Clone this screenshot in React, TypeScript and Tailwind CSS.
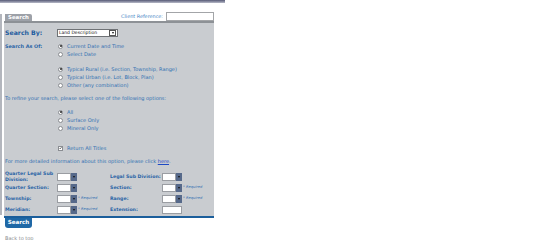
import React from 'react';

const font = { fontFamily: '"DejaVu Sans", Verdana, sans-serif' };

const Radio = ({ checked = false }: { checked?: boolean }) => (
  <span className="w-[5px] h-[5px] rounded-full bg-white border-[0.5px] border-[#8a8d92] flex items-center justify-center shrink-0">
    {checked && <span className="w-[2px] h-[2px] rounded-full bg-[#222]" />}
  </span>
);

const Option = ({ label, checked, className = '' }: { label: string; checked?: boolean; className?: string }) => (
  <div className={`flex items-center h-[8px] pl-[53px] ${className}`}>
    <Radio checked={checked} />
    <span className="ml-[4px] text-[5px] text-[#2f6fb0] leading-none">{label}</span>
  </div>
);

const Dropdown = ({ required = false }: { required?: boolean }) => (
  <div className="flex items-center">
    <span className="w-[14px] h-[8px] bg-white border-[0.5px] border-[#9a9da2]" />
    <span className="w-[6px] h-[8px] bg-[#56698a] flex items-center justify-center">
      <span className="w-0 h-0 border-l-[1.5px] border-r-[1.5px] border-t-[2px] border-l-transparent border-r-transparent border-t-[#111]" />
    </span>
    {required && <span className="ml-[1px] text-[3.6px] italic text-[#2f6fb0] leading-none">* Required</span>}
  </div>
);

const Label = ({ children, nowrap = false }: { children: React.ReactNode; nowrap?: boolean }) => (
  <span
    className={`w-[52px] shrink-0 text-[4.7px] font-bold text-[#2a64a6] leading-[6px] ${nowrap ? 'whitespace-nowrap' : ''}`}
  >
    {children}
  </span>
);

export default function App() {
  return (
    <div className="w-[541px] h-[240px] bg-white overflow-hidden" style={font}>
      <div className="h-[3px] w-[225px] bg-gradient-to-b from-[#575a76] to-[#b9bbc9]" />
      <div className="flex mt-[8px]">
        <div className="w-[2px] mt-[3px] h-[201px] bg-[#b3b6bd]" />
        <div className="ml-[2px] w-[210px]">
          {/* header */}
          <div className="flex items-end h-[10px]">
            <div className="ml-[1px] w-[27px] h-[7px] bg-[#9da1a8] rounded-tr-[2px] flex items-center justify-center">
              <span className="text-[5.4px] font-bold text-white leading-none">Search</span>
            </div>
            <div className="ml-auto flex items-center h-[9px]">
              <span className="text-[4.9px] text-[#4a88c6] leading-none mr-[3px]">Client Reference:</span>
              <span className="w-[48px] h-[9px] bg-white border-[0.5px] border-[#a3a5a8]" />
            </div>
          </div>
          <div className="h-[2px] bg-[#8d9196]" />

          {/* body */}
          <div className="bg-[#c9ccd0] pt-[6px] pl-[1px] h-[193px]">
            <div className="flex items-center h-[8px]">
              <span className="w-[52px] text-[6.2px] font-bold text-[#1f5c9f] leading-none">Search By:</span>
              <div className="w-[61px] h-[8px] bg-white border-[0.5px] border-[#6f7276] flex items-center">
                <span className="flex-1 pl-[1px] text-[4.5px] text-[#111] leading-none">Land Description</span>
                <span className="w-[7px] h-[6px] mr-[1px] border-[0.5px] border-[#555] flex items-center justify-center">
                  <span className="w-0 h-0 border-l-[1.5px] border-r-[1.5px] border-t-[2px] border-l-transparent border-r-transparent border-t-[#111]" />
                </span>
              </div>
            </div>

            <div className="relative mt-[5px]">
              <span className="absolute left-0 top-[1.5px] text-[4.9px] font-bold text-[#2a64a6] leading-none">Search As Of:</span>
              <Option label="Current Date and Time" checked />
              <Option label="Select Date" />
            </div>

            <Option className="mt-[7px]" label="Typical Rural (i.e. Section, Township, Range)" checked />
            <Option label="Typical Urban (i.e. Lot, Block, Plan)" />
            <Option label="Other (any combination)" />

            <div className="mt-[5px] h-[8px] flex items-center text-[5px] text-[#2f6fb0] leading-none">
              To refine your search, please select one of the following options:
            </div>

            <Option className="mt-[6px]" label="All" checked />
            <Option label="Surface Only" />
            <Option label="Mineral Only" />

            <div className="mt-[12px] flex items-center h-[8px] pl-[53px]">
              <span className="w-[5px] h-[5px] bg-white border-[0.5px] border-[#8a8d92] flex items-center justify-center">
                <svg viewBox="0 0 10 10" className="w-[4px] h-[4px]">
                  <path d="M1.5 5.5 L4 8 L8.5 2" fill="none" stroke="#222" strokeWidth="2" />
                </svg>
              </span>
              <span className="ml-[4px] text-[5px] text-[#2f6fb0] leading-none">Return All Titles</span>
            </div>

            <div className="mt-[5px] h-[8px] flex items-center text-[5px] text-[#2f6fb0] leading-none">
              <span>
                For more detailed information about this option, please click{' '}
                <span className="underline decoration-[0.5px] text-[#1d49c4]">here</span>.
              </span>
            </div>

            <div className="mt-[6px] grid grid-cols-[105px_1fr]">
              <div className="flex items-center h-[11px]">
                <Label>Quarter Legal Sub Division:</Label>
                <Dropdown />
              </div>
              <div className="flex items-center h-[11px]">
                <Label nowrap>Legal Sub Division:</Label>
                <Dropdown />
              </div>
              <div className="flex items-center h-[11px]">
                <Label nowrap>Quarter Section:</Label>
                <Dropdown />
              </div>
              <div className="flex items-center h-[11px]">
                <Label nowrap>Section:</Label>
                <Dropdown required />
              </div>
              <div className="flex items-center h-[11px]">
                <Label nowrap>Township:</Label>
                <Dropdown required />
              </div>
              <div className="flex items-center h-[11px]">
                <Label nowrap>Range:</Label>
                <Dropdown required />
              </div>
              <div className="flex items-center h-[11px]">
                <Label nowrap>Meridian:</Label>
                <Dropdown required />
              </div>
              <div className="flex items-center h-[11px]">
                <Label nowrap>Extension:</Label>
                <span className="w-[20px] h-[8px] bg-white border-[0.5px] border-[#9a9da2]" />
              </div>
            </div>
          </div>

          {/* footer tab */}
          <div className="h-[2px] bg-[#1b5e9b]" />
          <div className="ml-[1px] w-[27px] h-[10px] bg-[#1f68a6] rounded-b-[3px] flex items-center justify-center">
            <span className="text-[5.6px] font-bold text-white leading-none">Search</span>
          </div>
          <div className="mt-[8px] ml-[1px] text-[5px] text-[#8a8c90] leading-none">Back to top</div>
        </div>
      </div>
    </div>
  );
}
